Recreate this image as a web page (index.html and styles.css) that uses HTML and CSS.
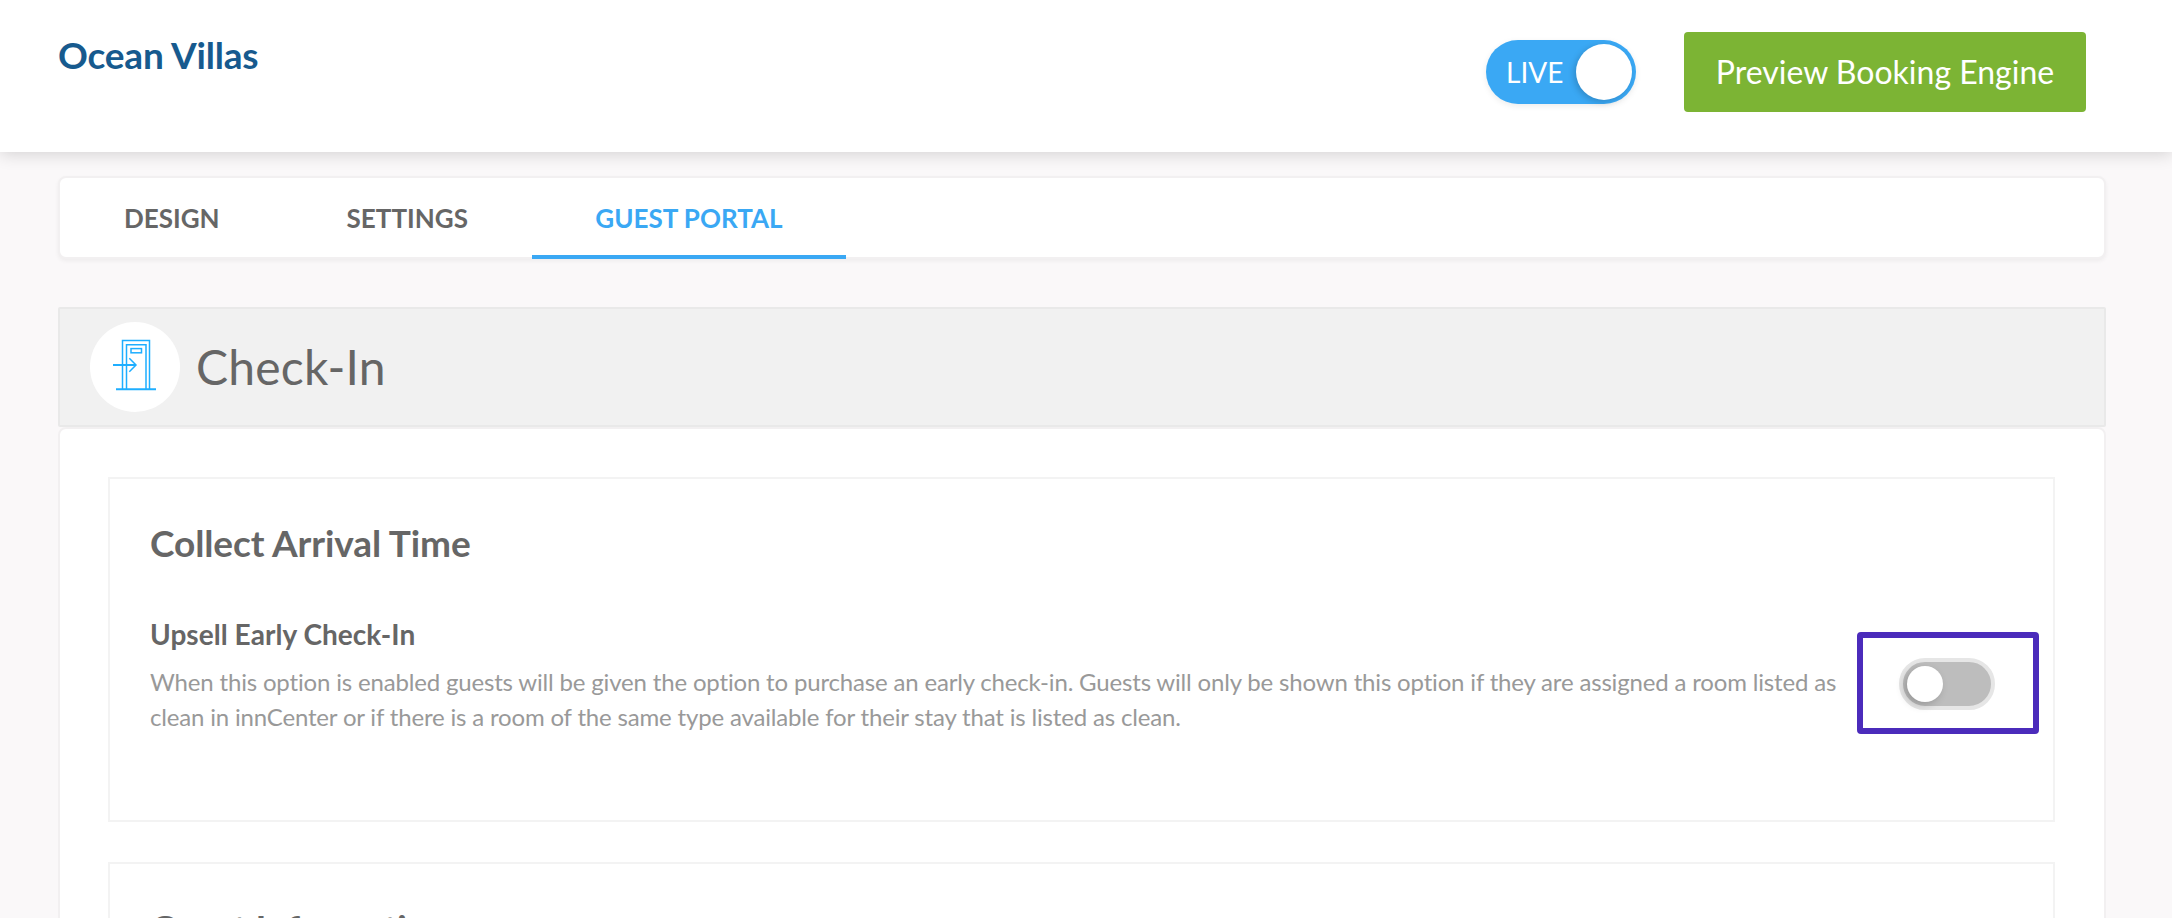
FILE: index.html
```html
<!DOCTYPE html>
<html lang="en">
<head>
<meta charset="utf-8">
<title>Ocean Villas</title>
<link rel="stylesheet" href="styles.css">
</head>
<body>
<header class="topbar">
  <h1 class="brand">Ocean Villas</h1>
  <div class="top-actions">
    <div class="live"><span class="live-label">LIVE</span><span class="live-knob"></span></div>
    <a class="preview">Preview Booking Engine</a>
  </div>
</header>
<main class="content">
  <nav class="tabs">
    <a class="tab tab-design">DESIGN</a>
    <a class="tab tab-settings">SETTINGS</a>
    <a class="tab tab-active">GUEST PORTAL</a>
  </nav>
  <div class="section-head">
    <span class="section-icon">
      <svg width="90" height="90" viewBox="0 0 90 90" fill="none" stroke="#1eaeff" stroke-width="1.5">
        <path d="M32.5 67V18.6H59.5V67"/>
        <path d="M36.5 67V22.8H56V67"/>
        <rect x="41" y="26.6" width="10.5" height="4.2"/>
        <path d="M26 67.2H66" stroke-width="2"/>
        <path d="M23 43H46" stroke-width="2"/>
        <path d="M39.3 36.3L46 43L39.3 49.7"/>
      </svg>
    </span>
    <h2 class="section-title">Check-In</h2>
  </div>
  <section class="card">
    <div class="panel panel-first">
      <h3 class="panel-title">Collect Arrival Time</h3>
      <div class="option">
        <div class="option-text">
          <h4 class="option-name">Upsell Early Check-In</h4>
          <p class="option-desc">When this option is enabled guests will be given the option to purchase an early check-in. Guests will only be shown this option if they are assigned a room listed as clean in innCenter or if there is a room of the same type available for their stay that is listed as clean.</p>
        </div>
        <div class="highlight">
          <span class="switch"><span class="switch-knob"></span></span>
        </div>
      </div>
    </div>
    <div class="panel">
      <h3 class="panel-title">Guest Information</h3>
    </div>
  </section>
</main>
</body>
</html>
```
FILE: styles.css
```css
* { box-sizing: border-box; }
html, body { height: 918px; overflow: hidden; }
body {
  margin: 0;
  background: #faf8f9;
  font-family: Lato, "Open Sans", sans-serif;
  color: #666;
}
h1, h2, h3, h4, p { margin: 0; }

.topbar {
  position: relative;
  height: 152px;
  background: #fff;
  padding: 32px 86px 0 58px;
  display: flex;
  justify-content: space-between;
  align-items: flex-start;
  box-shadow: 0 2px 16px rgba(0, 0, 0, .16);
}
.brand {
  font-size: 37px;
  letter-spacing: -.2px;
  line-height: 46px;
  font-weight: 700;
  color: #175a8e;
}
.top-actions { display: flex; align-items: center; gap: 48px; }
.live {
  width: 150px;
  height: 64px;
  border-radius: 32px;
  background: #3aa8f4;
  display: flex;
  align-items: center;
  justify-content: space-between;
  padding: 0 4px 0 20px;
  box-shadow: 0 2px 6px rgba(0, 0, 0, .08);
}
.live-label { color: #fff; font-size: 28px; line-height: 36px; }
.live-knob {
  width: 56px;
  height: 56px;
  border-radius: 50%;
  background: #fff;
  box-shadow: -2px 2px 6px rgba(0, 0, 0, .18);
}
.preview {
  width: 402px;
  height: 80px;
  border-radius: 4px;
  background: #7cb434;
  color: #fff;
  font-size: 32px;
  line-height: 80px;
  text-align: center;
}

.content { padding: 24px 66px 0 58px; }
.tabs {
  height: 83px;
  background: #fff;
  border: 2px solid #f2f0f1;
  border-radius: 8px;
  display: flex;
  padding-left: 64px;
  box-shadow: 0 2px 4px rgba(0, 0, 0, .05);
}
.tab {
  font-size: 26px;
  font-weight: 700;
  line-height: 80px;
  color: #666;
}
.tab-design { margin-right: 127px; }
.tab-settings { margin-right: 64px; }
.tab-active {
  width: 314px;
  height: 81px;
  text-align: center;
  color: #3aa8f4;
  border-bottom: 4px solid #3aa8f4;
}

.section-head {
  margin-top: 48px;
  height: 120px;
  background: #f1f1f1;
  border: 2px solid #e9e9e9;
  border-radius: 2px;
  display: flex;
  align-items: center;
  padding-left: 30px;
  gap: 16px;
}
.section-icon {
  width: 90px;
  height: 90px;
  border-radius: 50%;
  background: #fff;
  flex: none;
}
.section-icon svg { display: block; }
.section-title { font-size: 48px; letter-spacing: .2px; font-weight: 400; line-height: 60px; color: #666; }

.card {
  background: #fff;
  border: 2px solid #f2f0f1;
  border-radius: 8px;
  padding: 48px 49px 0 48px;
  height: 600px;
}
.panel {
  border: 2px solid #f3f3f3;
  padding: 41px 40px 0;
  height: 300px;
}
.panel-first { height: 345px; margin-bottom: 40px; }
.panel-title { font-size: 37px; letter-spacing: -.1px; font-weight: 700; line-height: 46px; color: #666; }
.option { display: flex; align-items: flex-start; margin-top: 50px; }
.option-text { width: 1707px; flex: none; }
.option-name { font-size: 28px; letter-spacing: .05px; font-weight: 700; line-height: 36px; color: #666; }
.option-desc { margin-top: 13px; font-size: 24px; letter-spacing: -.17px; line-height: 34.5px; color: #999; }
.highlight {
  width: 182px;
  height: 102px;
  margin-top: 16px;
  border: 6px solid #4b2bbb;
  border-radius: 4px;
  display: flex;
  align-items: center;
  justify-content: center;
  padding: 2px 2px 0 0;
  flex: none;
}
.switch {
  width: 96px;
  height: 52px;
  border-radius: 26px;
  background: #bdbdbd;
  border: 4px solid #e6e6e6;
  display: flex;
  align-items: center;
  padding-left: 4px;
}
.switch-knob {
  width: 36px;
  height: 36px;
  border-radius: 50%;
  background: #fff;
  box-shadow: -3px 3px 8px rgba(0, 0, 0, .2);
}
```
